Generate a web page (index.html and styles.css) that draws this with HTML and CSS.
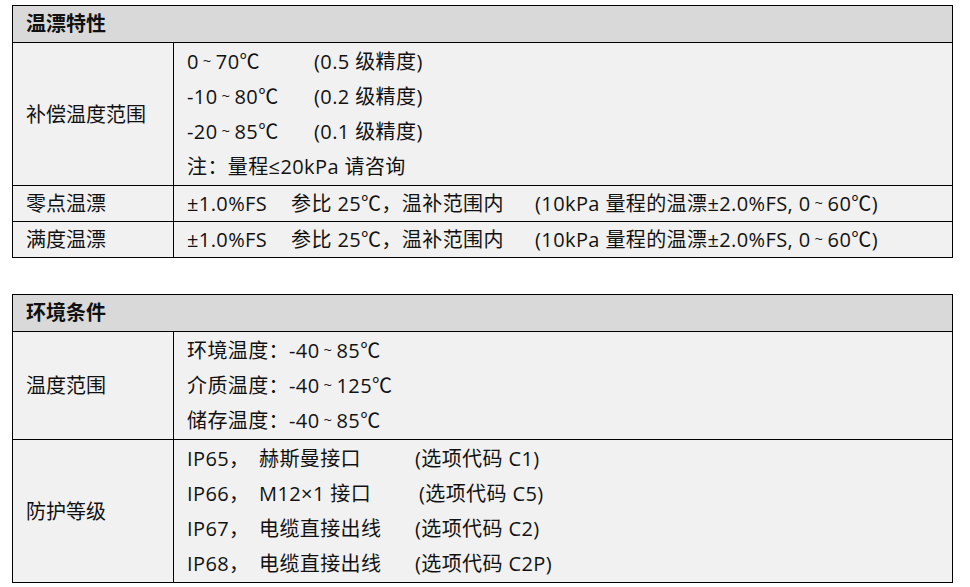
FILE: index.html
```html
<!DOCTYPE html>
<html lang="zh-CN">
<head>
<meta charset="utf-8">
<link rel="stylesheet" href="styles.css">
</head>
<body>
<div class="page">
  <table class="spec">
    <colgroup><col class="col-label"><col></colgroup>
    <tr><th colspan="2" class="head"><div class="hline">温漂特性</div></th></tr>
    <tr>
      <td class="label"><div class="line">补偿温度范围</div></td>
      <td class="value multi">
        <div class="line"><span class="c1">0<span class="t">~</span>70℃</span>(0.5 级精度)</div>
        <div class="line"><span class="c1">-10<span class="t">~</span>80℃</span>(0.2 级精度)</div>
        <div class="line"><span class="c1">-20<span class="t">~</span>85℃</span>(0.1 级精度)</div>
        <div class="line">注：量程≤20kPa 请咨询</div>
      </td>
    </tr>
    <tr>
      <td class="label"><div class="line">零点温漂</div></td>
      <td class="value"><div class="line"><span class="d1">±1.0%FS</span><span class="d2">参比 25℃，温补范围内</span>(10kPa 量程的温漂±2.0%FS, 0<span class="t">~</span>60℃)</div></td>
    </tr>
    <tr>
      <td class="label"><div class="line">满度温漂</div></td>
      <td class="value"><div class="line"><span class="d1">±1.0%FS</span><span class="d2">参比 25℃，温补范围内</span>(10kPa 量程的温漂±2.0%FS, 0<span class="t">~</span>60℃)</div></td>
    </tr>
  </table>

  <table class="spec second">
    <colgroup><col class="col-label"><col></colgroup>
    <tr><th colspan="2" class="head"><div class="hline">环境条件</div></th></tr>
    <tr>
      <td class="label"><div class="line">温度范围</div></td>
      <td class="value multi">
        <div class="line">环境温度：-40<span class="t">~</span>85℃</div>
        <div class="line">介质温度：-40<span class="t">~</span>125℃</div>
        <div class="line">储存温度：-40<span class="t">~</span>85℃</div>
      </td>
    </tr>
    <tr>
      <td class="label"><div class="line">防护等级</div></td>
      <td class="value multi">
        <div class="line"><span class="p1">IP65，</span><span class="p2">赫斯曼接口</span>(选项代码 C1)</div>
        <div class="line"><span class="p1">IP66，</span><span class="p2">M12×1 接口</span><span class="shift">(选项代码 C5)</span></div>
        <div class="line"><span class="p1">IP67，</span><span class="p2">电缆直接出线</span>(选项代码 C2)</div>
        <div class="line"><span class="p1">IP68，</span><span class="p2">电缆直接出线</span>(选项代码 C2P)</div>
      </td>
    </tr>
  </table>
</div>
</body>
</html>
```

FILE: styles.css
```css
html, body {
  margin: 0;
  padding: 0;
  background: #ffffff;
}

.page {
  padding: 5px 0 0 12px;
}

.spec {
  border-collapse: collapse;
  width: 941px;
  font-family: "Open Sans", "Noto Sans CJK SC", sans-serif;
  font-size: 20px;
  color: #111;
  table-layout: fixed;
}

.col-label {
  width: 161px;
}

.spec.second {
  margin-top: 36px;
}

.spec th,
.spec td {
  border: 1px solid #000;
  padding: 0;
  text-align: left;
  white-space: nowrap;
}

.head {
  background: #d9d9d9;
  font-weight: bold;
  padding-left: 13px !important;
}

.hline {
  height: 36px;
  line-height: 36px;
  overflow: visible;
}

.label {
  background: #f1f1f1;
  padding-left: 13px !important;
  vertical-align: middle;
}

.value {
  background: #f1f1f1;
  padding-left: 13px !important;
  letter-spacing: 0.4px;
}

.multi {
  padding-top: 1px !important;
  padding-bottom: 1px !important;
}

.line {
  height: 35px;
  line-height: 35px;
  overflow: visible;
}

.t {
  display: inline-block;
  font-size: 15px;
  line-height: 15px;
  margin: 0 4px;
  vertical-align: 3px;
}

.c1 {
  display: inline-block;
  width: 127px;
}

.d1 {
  display: inline-block;
  width: 104px;
}

.d2 {
  display: inline-block;
  width: 244px;
}

.p1 {
  display: inline-block;
  width: 72px;
}

.p2 {
  display: inline-block;
  width: 156px;
}

.shift {
  margin-left: 4px;
}
```
